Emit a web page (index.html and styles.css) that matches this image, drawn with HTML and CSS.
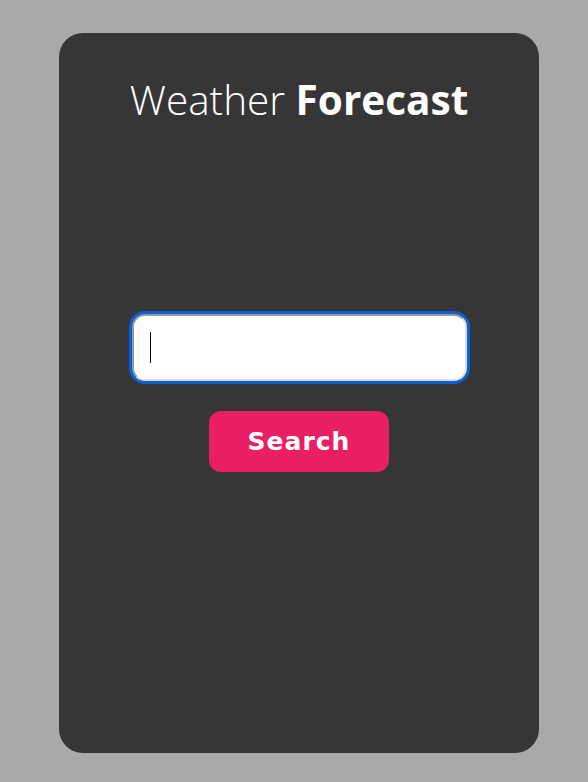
FILE: index.html
```html
<!DOCTYPE html>
<html>
<head>
<meta charset="utf-8">
<link rel="stylesheet" href="styles.css">
</head>
<body>
<div class="card">
  <h1 class="title"><span class="light">Weather</span> <span class="bold">Forecast</span></h1>
  <div class="search">
    <div class="field">
      <input class="input" type="text">
      <span class="caret"></span>
    </div>
    <button class="btn">Search</button>
  </div>
</div>
</body>
</html>
```
FILE: styles.css
```css
html, body {
  margin: 0;
  padding: 0;
  background: #a9a9a9;
}
body {
  padding: 33px 0 0 59px;
  height: 782px;
  box-sizing: border-box;
}
.card {
  width: 480px;
  height: 720px;
  background: #363636;
  border-radius: 24px;
  box-sizing: border-box;
  padding-top: 47px;
  display: flex;
  flex-direction: column;
  align-items: center;
}
.title {
  margin: 0;
  font-family: "Open Sans", sans-serif;
  font-size: 40.5px;
  line-height: 40px;
  color: #fff;
  font-weight: 300;
  letter-spacing: 0;
}
.title .bold { font-weight: 700; }
.search {
  margin-top: 191px;
  display: flex;
  flex-direction: column;
  align-items: center;
}
.field {
  position: relative;
  border: 3px solid #0a5fdb;
  border-radius: 16px;
}
.input {
  display: block;
  width: 335px;
  height: 67px;
  box-sizing: border-box;
  border-radius: 13px;
  border-style: solid;
  border-width: 2px;
  border-color: #9a9a9a #dcdcdc #dcdcdc #9a9a9a;
  background: #fff;
  outline: none;
  font-size: 28px;
  padding: 0 18px;
}
.caret {
  position: absolute;
  left: 18px;
  top: 18px;
  width: 1px;
  height: 31px;
  background: #000;
}
.btn {
  margin-top: 27px;
  width: 180px;
  height: 61px;
  border: none;
  border-radius: 12px;
  background: #e91e63;
  color: #fff;
  font-family: "DejaVu Sans", Verdana, sans-serif;
  font-weight: 700;
  font-size: 25px;
  letter-spacing: 1px;
  padding: 0;
}
```
